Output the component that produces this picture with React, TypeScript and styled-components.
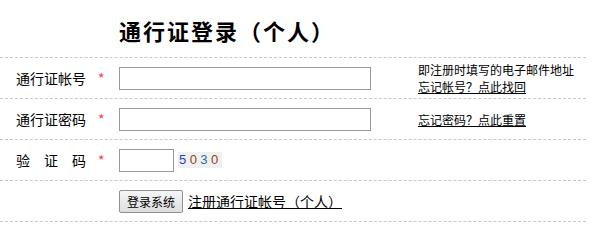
import React from "react";
import styled, { createGlobalStyle } from "styled-components";

const GlobalStyle = createGlobalStyle`
  body {
    margin: 0;
    background: #fff;
    font-family: "Noto Sans CJK SC", "Noto Sans", sans-serif;
    color: #000;
  }
`;

const Page = styled.div`
  width: 586px;
`;

const Heading = styled.h1`
  margin: 0;
  height: 57px;
  padding-left: 119px;
  padding-top: 2px;
  box-sizing: border-box;
  display: flex;
  align-items: center;
  font-size: 22px;
  font-weight: 700;
  letter-spacing: 2px;
`;

const Row = styled.div`
  display: grid;
  grid-template-columns: 119px 299px 1fr;
  height: 41px;
  box-sizing: border-box;
  border-top: 1px dashed #c8c8c8;
  &:last-child {
    border-bottom: 1px dashed #c8c8c8;
    height: 42px;
  }
`;

const LabelCell = styled.div`
  display: flex;
  align-items: center;
  padding-left: 16px;
  font-size: 14px;
`;

const LabelText = styled.span`
  display: flex;
  justify-content: space-between;
  width: 70px;
  margin-right: 12px;
  white-space: nowrap;
`;

const Star = styled.span`
  color: #ff3b3b;
  font-size: 14px;
`;

const FieldCell = styled.div<{ $wide?: boolean }>`
  display: flex;
  align-items: center;
  grid-column: ${(p) => (p.$wide ? "2 / 4" : "auto")};
`;

const TextInput = styled.input<{ $width: number }>`
  box-sizing: border-box;
  width: ${(p) => p.$width}px;
  height: 23px;
  border: 1px solid #999;
  padding: 0 3px;
  margin: 0;
  outline: none;
`;

const Captcha = styled.span`
  margin-left: 4px;
  padding: 1px 0 1px 1px;
  background: #f0f0f0;
  font-family: "Liberation Sans", Arial, sans-serif;
  font-size: 13px;
  letter-spacing: 3.4px;
  line-height: 14px;
`;

const Digit = styled.span<{ $color: string }>`
  color: ${(p) => p.$color};
`;

const SubmitButton = styled.button`
  box-sizing: border-box;
  width: 64px;
  height: 23px;
  margin: 0;
  padding: 0;
  font-family: "Noto Sans CJK SC", sans-serif;
  font-size: 12px;
  color: #000;
  border: 1px solid #8f8f8f;
  border-radius: 2px;
  background: linear-gradient(#f6f6f6, #dedede);
`;

const RegisterLink = styled.a`
  margin-left: 5px;
  font-size: 14px;
  color: #000;
  text-decoration: underline;
  white-space: nowrap;
`;

const NoteCell = styled.div`
  display: flex;
  flex-direction: column;
  justify-content: center;
  font-size: 12px;
  line-height: 17px;
  white-space: nowrap;
`;

const NoteLink = styled.a`
  color: #000;
  text-decoration: underline;
`;

const captchaDigits = [
  { d: "5", c: "#1d3fd6" },
  { d: "0", c: "#8a4a14" },
  { d: "3", c: "#1f6fa6" },
  { d: "0", c: "#8a4a14" },
];

function Label({ text }: { text: string }) {
  return (
    <LabelCell>
      <LabelText>
        {text.split("").map((ch, i) => (
          <span key={i}>{ch}</span>
        ))}
      </LabelText>
      <Star>*</Star>
    </LabelCell>
  );
}

export default function App() {
  return (
    <Page>
      <GlobalStyle />
      <Heading>通行证登录（个人）</Heading>
      <Row>
        <Label text="通行证帐号" />
        <FieldCell>
          <TextInput $width={252} type="text" />
        </FieldCell>
        <NoteCell>
          <span>即注册时填写的电子邮件地址</span>
          <NoteLink href="#">忘记帐号？点此找回</NoteLink>
        </NoteCell>
      </Row>
      <Row>
        <Label text="通行证密码" />
        <FieldCell>
          <TextInput $width={252} type="password" />
        </FieldCell>
        <NoteCell>
          <NoteLink href="#">忘记密码？点此重置</NoteLink>
        </NoteCell>
      </Row>
      <Row>
        <Label text="验证码" />
        <FieldCell>
          <TextInput $width={55} type="text" />
          <Captcha>
            {captchaDigits.map((x, i) => (
              <Digit key={i} $color={x.c}>
                {x.d}
              </Digit>
            ))}
          </Captcha>
        </FieldCell>
        <NoteCell />
      </Row>
      <Row>
        <LabelCell />
        <FieldCell $wide>
          <SubmitButton type="button">登录系统</SubmitButton>
          <RegisterLink href="#">注册通行证帐号（个人）</RegisterLink>
        </FieldCell>
      </Row>
    </Page>
  );
}
